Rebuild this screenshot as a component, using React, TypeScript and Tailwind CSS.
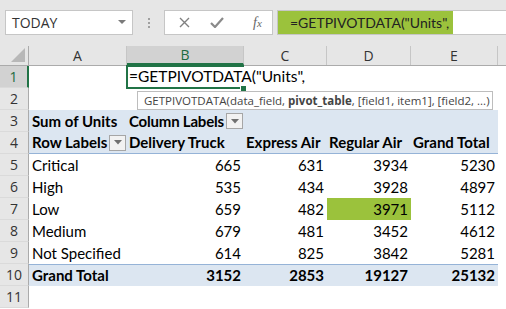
import clsx from "clsx";

const W = ["w-[98px]", "w-[117px]", "w-[83px]", "w-[84px]", "w-[87px]"];
const LETTERS = ["A", "B", "C", "D", "E"];

const rows: [string, number, number, number, number][] = [
  ["Critical", 665, 631, 3934, 5230],
  ["High", 535, 434, 3928, 4897],
  ["Low", 659, 482, 3971, 5112],
  ["Medium", 679, 481, 3452, 4612],
  ["Not Specified", 614, 825, 3842, 5281],
];

function RowHead({ n, active }: { n: number; active?: boolean }) {
  return (
    <div
      className={clsx(
        "w-[29px] shrink-0 h-full flex items-center justify-center text-[14px] font-['Open_Sans',sans-serif] border-b border-b-[#dadada]",
        active
          ? "bg-[#d2d2d2] border-r-2 border-r-[#217346] text-[#1e6b40]"
          : "bg-[#e6e6e6] border-r border-r-[#ababab] text-[#333]"
      )}
    >
      {n}
    </div>
  );
}

function Drop() {
  return (
    <span className="w-[17px] h-[16px] ml-auto shrink-0 border border-[#a6a6a6] bg-[#f2f2f2] flex items-center justify-center">
      <svg width="8" height="5" viewBox="0 0 8 5">
        <path d="M0 0h8L4 4.5z" fill="#707070" />
      </svg>
    </span>
  );
}

function Row({ n, children, active }: { n: number; children?: React.ReactNode; active?: boolean }) {
  return (
    <div className="flex h-[22px]">
      <RowHead n={n} active={active} />
      {children}
    </div>
  );
}

export default function App() {
  return (
    <div className="relative w-[506px] h-[309px] overflow-hidden bg-white font-['Lato',sans-serif] text-[15px] text-black">
      {/* Formula bar strip */}
      <div className="h-[46px] bg-[#e6e6e6] pt-[10px] flex items-start">
        <div className="ml-[5px] w-[128px] h-[25px] bg-white border border-[#c6c6c6] flex items-center pl-[6px] pr-[6px] font-['Open_Sans',sans-serif] text-[14px] text-[#333]">
          TODAY
          <svg className="ml-auto" width="8" height="5" viewBox="0 0 8 5">
            <path d="M0 0h8L4 4z" fill="#7a7a7a" />
          </svg>
        </div>
        <div className="w-[31px] h-[25px] flex flex-col items-center justify-center gap-[2px]">
          <span className="w-[2px] h-[2px] bg-[#a0a0a0]" />
          <span className="w-[2px] h-[2px] bg-[#a0a0a0]" />
          <span className="w-[2px] h-[2px] bg-[#a0a0a0]" />
        </div>
        <div className="w-[109px] h-[25px] bg-white border border-[#c6c6c6] flex items-center pl-[14px] gap-[20px]">
          <svg width="11" height="11" viewBox="0 0 11 11">
            <path d="M1 1l9 9M10 1l-9 9" stroke="#808080" strokeWidth="1.4" />
          </svg>
          <svg width="14" height="11" viewBox="0 0 14 11">
            <path d="M1 6l4 4 8-9" stroke="#8a8a8a" strokeWidth="2.2" fill="none" />
          </svg>
          <span className="ml-[9px] font-['Liberation_Serif',serif] italic text-[14px] text-[#666]">
            f<span className="text-[11px]">x</span>
          </span>
        </div>
        <div className="ml-[4px] flex-1 h-[25px] bg-white border border-[#c6c6c6] border-r-0 flex">
          <div className="w-[175px] h-full bg-[#9bc23c] flex items-center pl-[12px] text-[14px] text-[#222] whitespace-nowrap">
            =GETPIVOTDATA("Units",
          </div>
        </div>
      </div>

      {/* Column headers */}
      <div className="flex h-[20px] bg-[#e6e6e6] border-b border-[#ababab] font-['Open_Sans',sans-serif] text-[14px] text-[#333]">
        <div className="w-[29px] shrink-0 border-r border-[#ababab] flex items-end justify-end pr-[3px] pb-[3px]">
          <svg width="14" height="14" viewBox="0 0 14 14">
            <path d="M14 0v14H0z" fill="#b8b8b8" />
          </svg>
        </div>
        {LETTERS.map((l, i) => (
          <div
            key={l}
            className={clsx(
              W[i],
              "shrink-0 h-full flex items-center justify-center border-r border-[#c6c6c6]",
              l === "B" && "bg-[#d2d2d2] border-b-2 border-b-[#217346] text-[#1e6b40]"
            )}
          >
            {l}
          </div>
        ))}
        <div className="flex-1" />
      </div>

      {/* Row 1 */}
      <Row n={1} active>
        <div className={W[0]} />
        <div className={clsx(W[1], "relative shrink-0")}>
          <div className="absolute -left-[1px] -top-[1px] bottom-[-1px] right-0 border-2 border-r-0 border-[#217346]" />
          <div className="absolute right-[-3px] bottom-[-4px] w-[7px] h-[7px] bg-[#217346] border border-white" />
          <div className="relative z-10 h-full flex items-center pl-[2px] whitespace-nowrap text-[15.5px]">
            =GETPIVOTDATA("Units",
            <span className="ml-[2px] w-[1px] h-[16px] bg-black" />
          </div>
        </div>
      </Row>

      {/* Row 2 */}
      <Row n={2} />

      {/* Row 3 */}
      <Row n={3}>
        <div className={clsx(W[0], "shrink-0 bg-[#dce6f1] flex items-center pl-[3px] font-bold whitespace-nowrap")}>
          Sum of Units
        </div>
        <div className={clsx(W[1], "shrink-0 bg-[#dce6f1] flex items-center pl-[2px] pr-[1px] font-bold whitespace-nowrap tracking-[-0.2px]")}>
          Column Labels
          <Drop />
        </div>
        <div className={clsx(W[2], "shrink-0 bg-[#dce6f1]")} />
        <div className={clsx(W[3], "shrink-0 bg-[#dce6f1]")} />
        <div className={clsx(W[4], "shrink-0 bg-[#dce6f1]")} />
      </Row>

      {/* Row 4 */}
      <Row n={4}>
        <div className={clsx(W[0], "shrink-0 bg-[#dce6f1] border-b border-[#95b3d7] flex items-center pl-[3px] pr-[1px] font-bold whitespace-nowrap")}>
          Row Labels
          <Drop />
        </div>
        {["Delivery Truck", "Express Air", "Regular Air", "Grand Total"].map((h, i) => (
          <div
            key={h}
            className={clsx(W[i + 1], "shrink-0 bg-[#dce6f1] border-b border-[#95b3d7] flex items-center pl-[2px] font-bold whitespace-nowrap")}
          >
            {h}
          </div>
        ))}
      </Row>

      {/* Data rows */}
      {rows.map(([label, ...nums], r) => (
        <Row key={label} n={r + 5}>
          <div className={clsx(W[0], "shrink-0 flex items-center pl-[3px] whitespace-nowrap")}>{label}</div>
          {nums.map((v, i) => (
            <div
              key={i}
              className={clsx(
                W[i + 1],
                "shrink-0 flex items-center justify-end pr-[3px]",
                label === "Low" && i === 2 && "bg-[#9bc23c]"
              )}
            >
              {v}
            </div>
          ))}
        </Row>
      ))}

      {/* Grand total */}
      <Row n={10}>
        <div className={clsx(W[0], "shrink-0 bg-[#dce6f1] border-t border-[#95b3d7] flex items-center pl-[3px] font-bold")}>
          Grand Total
        </div>
        {[3152, 2853, 19127, 25132].map((v, i) => (
          <div
            key={i}
            className={clsx(W[i + 1], "shrink-0 bg-[#dce6f1] border-t border-[#95b3d7] flex items-center justify-end pr-[3px] font-bold")}
          >
            {v}
          </div>
        ))}
      </Row>

      <Row n={11} />

      {/* Function tooltip */}
      <div className="absolute left-[137px] top-[91px] w-[356px] h-[19px] bg-white border border-[#bdbdbd] flex items-center pl-[6px] font-['Open_Sans',sans-serif] text-[11.5px] text-[#444] whitespace-nowrap z-20">
        GETPIVOTDATA(data_field,&nbsp;<b>pivot_table</b>, [field1, item1], [field2, ...)
      </div>
    </div>
  );
}
